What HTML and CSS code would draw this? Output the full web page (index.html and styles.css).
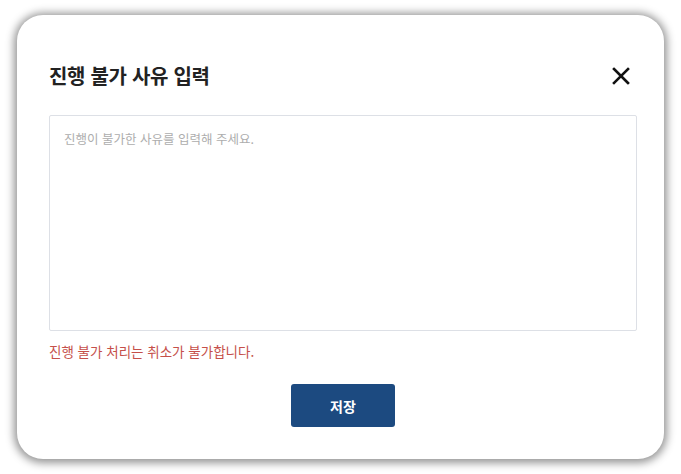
FILE: index.html
```html
<!DOCTYPE html>
<html lang="ko">
<head>
<meta charset="utf-8">
<title>진행 불가 사유 입력</title>
<link rel="stylesheet" href="styles.css">
</head>
<body>
<div class="modal">
  <div class="modal-header">
    <h2 class="modal-title">진행 불가 사유 입력</h2>
    <button class="close-btn" type="button" aria-label="닫기">
      <svg width="18" height="18" viewBox="0 0 18 18"><path d="M2 2 L16 16 M16 2 L2 16" stroke="#111" stroke-width="2.6" stroke-linecap="square" fill="none"/></svg>
    </button>
  </div>
  <textarea class="reason" placeholder="진행이 불가한 사유를 입력해 주세요."></textarea>
  <p class="error">진행 불가 처리는 취소가 불가합니다.</p>
  <div class="actions">
    <button class="save-btn" type="button">저장</button>
  </div>
</div>
</body>
</html>
```
FILE: styles.css
```css
html, body {
  margin: 0;
  background: #fff;
}
body {
  padding: 15px 0 15px 17px;
  font-family: "Noto Sans CJK KR", "Noto Sans", sans-serif;
}
.modal {
  box-sizing: border-box;
  width: 647px;
  height: 444px;
  background: #fff;
  border-radius: 26px;
  box-shadow: 0 1px 8px 3px rgba(0, 0, 0, 0.42);
  padding: 47px 27px 0 32px;
  display: flex;
  flex-direction: column;
}
.modal-header {
  display: flex;
  justify-content: space-between;
  align-items: center;
  height: 28px;
}
.modal-title {
  margin: 0;
  font-size: 20px;
  line-height: 28px;
  font-weight: 700;
  color: #222;
  letter-spacing: -0.3px;
}
.close-btn {
  border: 0;
  background: none;
  padding: 0;
  margin-right: 7px;
  width: 18px;
  height: 18px;
  display: flex;
}
.reason {
  margin-top: 25px;
  box-sizing: border-box;
  width: 100%;
  height: 216px;
  border: 1px solid #dde0e6;
  border-radius: 2px;
  padding: 13px 14px;
  font-family: inherit;
  font-size: 12.5px;
  line-height: 20px;
  color: #333;
  resize: none;
  outline: none;
}
.reason::placeholder {
  color: #adadad;
}
.error {
  margin: 10px 0 0;
  font-size: 13.5px;
  line-height: 20px;
  color: #c5504a;
}
.actions {
  display: flex;
  justify-content: center;
  margin-top: 23px;
}
.save-btn {
  width: 104px;
  height: 43px;
  border: 0;
  border-radius: 3px;
  background: #1c4a80;
  color: #fff;
  font-family: inherit;
  font-size: 14px;
  font-weight: 700;
}
```
